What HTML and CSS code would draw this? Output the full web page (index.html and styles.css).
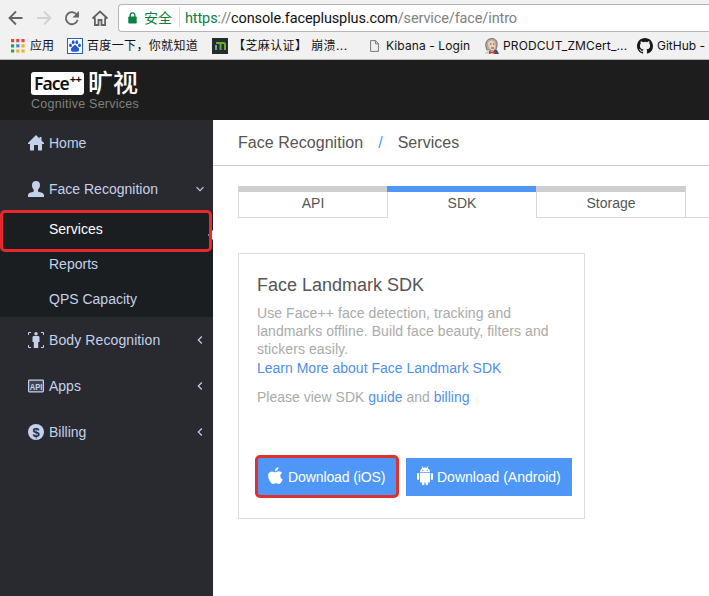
FILE: index.html
```html
<!DOCTYPE html>
<html lang="en">
<head>
<meta charset="utf-8">
<title>Face++ Console</title>
<link rel="stylesheet" href="styles.css">
</head>
<body>
<div class="browser">
  <div class="toolbar">
    <svg class="nav" width="112" height="20" viewBox="0 0 112 20" fill="none" stroke="#646464" stroke-width="1.800">
      <path d="M22.500 10H10M16 3.500L9.500 10l6.500 6.500"/>
      <path stroke="#d2d2d2" d="M37 10h13M44 3.500l6.500 6.500-6.500 6.500"/>
      <path d="M76.600 6.500A6 6 0 1 0 77.600 12"/><path fill="#646464" stroke="none" d="M79 3v6.500h-6.500z"/>
      <path stroke-width="1.800" d="M92.500 10.500L100 3.500l7.500 7M94.900 9.500v7.500h3.600v-5h3v5h3.600V9.500"/>
    </svg>
    <div class="address">
      <svg class="lock" width="9" height="12" viewBox="0 0 9 12"><path d="M2.200 5V3.200a2.300 2.300 0 0 1 4.600 0V5" fill="none" stroke="#0b8043" stroke-width="1.300"/><rect x=".3" y="4.500" width="8.400" height="7" rx=".8" fill="#0b8043"/></svg>
      <span class="secure">安全</span>
      <span class="url"><span class="scheme">https</span>://<span class="host">console.faceplusplus.com</span>/service/face/intro</span>
    </div>
  </div>
  <div class="bookmarks">
    <span class="mark apps"><svg width="14" height="14" viewBox="0 0 14 14"><path fill="#dd4b3e" d="M0 0h3.200v3.200H0zM5.200 0h3.200v3.200H5.200zM10.400 0h3.200v3.200h-3.200z"/><path fill="#20a060" d="M0 5.200h3.200v3.200H0zM0 10.400h3.200v3.200H0z"/><path fill="#4285e8" d="M5.200 5.200h3.200v3.200H5.200z"/><path fill="#e8b22c" d="M10.400 5.200h3.200v3.200h-3.200zM5.200 10.400h3.200v3.200H5.200zM10.400 10.400h3.200v3.200h-3.200z"/></svg><span>应用</span></span>
    <span class="mark baidu"><svg width="16" height="16" viewBox="0 0 16 16"><rect x=".5" y=".5" width="15" height="15" fill="#fff" stroke="#2362c8"/><g fill="#2459d0"><ellipse cx="3.500" cy="7.300" rx="1.400" ry="1.900"/><ellipse cx="6.200" cy="4.200" rx="1.400" ry="2"/><ellipse cx="9.800" cy="4.200" rx="1.400" ry="2"/><ellipse cx="12.500" cy="7.300" rx="1.400" ry="1.900"/><path d="M8 7c1.500 0 2 1.500 3.200 2.600 1.800 1.700.8 4.400-1.200 4.200-1.500-.2-2.500-.2-4 0-2 .2-3-2.500-1.200-4.200C6 8.500 6.500 7 8 7z"/></g></svg><span>百度一下，你就知道</span></span>
    <span class="mark sesame"><svg width="16" height="16" viewBox="0 0 16 16"><path fill="#262b2c" d="M0 0h16v16H0z"/><path fill="none" stroke="#69a83d" stroke-width="2" d="M4 5h7.500a1.500 1.500 0 0 1 1.500 1.500V12M8.500 5v7"/><path fill="none" stroke="#5da9ae" stroke-width="2" d="M4 7v5"/></svg><span>【芝麻认证】 崩溃...</span></span>
    <span class="mark kibana"><svg width="9" height="12" viewBox="0 0 9 12" fill="none" stroke="#777"><path d="M.6.600h4.900l2.900 3v7.800H.6zM5.400.600v3.200h3"/></svg><span>Kibana - Login</span></span>
    <span class="mark jenkins"><svg width="16" height="17" viewBox="0 0 16 17"><path fill="#b5aaa0" stroke="#55504c" stroke-width=".7" d="M3 12C1 8 1 2 6 .8c5-1.200 8 2 7 7.200-.3 2-1 4-2 5z"/><path fill="#ecd0b2" d="M4 5c1-2 3-3 5-2 3 1 3 7 .5 9.500C7 13 4.500 11 4 5z"/><path fill="#ddd2c8" d="M1 16c0-2 2-4 4-4l3 3 5-2 2 3z"/><path fill="#34556c" d="M10 12h3l2 4h-5z"/><path fill="#c43b38" d="M5 12.800l3 1 3-1V16l-3-1-3 1z"/><path stroke="#3b3431" stroke-width=".8" fill="none" d="M6 6h1.500M9 6h1.500M7 10h3"/></svg><span>PRODCUT_ZMCert_...</span></span>
    <span class="mark github"><svg width="16" height="16" viewBox="0 0 16 16"><path fill="#171717" fill-rule="evenodd" d="M8 0C3.580 0 0 3.580 0 8c0 3.540 2.290 6.530 5.470 7.590.4.070.55-.17.55-.38v-1.490c-2.010.37-2.530-.49-2.690-.94-.09-.23-.48-.94-.82-1.130-.28-.15-.68-.52-.01-.53.630-.01 1.080.58 1.230.82.72 1.210 1.870.87 2.330.66.070-.52.280-.87.510-1.070-1.780-.2-3.640-.89-3.640-3.950 0-.87.310-1.590.82-2.150-.08-.2-.36-1.020.08-2.120 0 0 .67-.21 2.200.82a7.600 7.600 0 0 1 4 0c1.530-1.040 2.200-.82 2.200-.82.440 1.100.160 1.920.080 2.120.510.560.820 1.270.820 2.150 0 3.070-1.870 3.750-3.650 3.950.290.250.540.730.540 1.480v2.200c0 .21.150.46.550.38A8 8 0 0 0 16 8c0-4.420-3.580-8-8-8z"/></svg><span>GitHub -</span></span>
  </div>
</div>
<header class="header">
  <div class="logo"><span class="face">Face<sup>++</sup></span><span class="brand">旷视</span></div>
  <div class="tagline">Cognitive Services</div>
</header>
<div class="layout">
  <nav class="sidebar">
    <div class="item"><svg class="icon" viewBox="0 0 16 16"><path d="M8 0L0 8v1h2v6.500h4V10h4v5.500h4V9h2V8l-2.500-2.500V2h-2v1.500z"/></svg><span>Home</span></div>
    <div class="item"><svg class="icon" viewBox="0 0 16 16"><path d="M8 0C5.500 0 4 1.500 4 4c0 2 .7 3.500 1.700 4.500v1.800C5.500 11.500 0 11 0 14.300V16h16v-1.700c0-3.300-5.500-2.800-6-4V8.500c1-1 2-2.500 2-4.500C12 1.500 10.500 0 8 0z"/></svg><span>Face Recognition</span><svg class="chevron" viewBox="0 0 8 8"><path d="M.5 2.200L4 5.700l3.500-3.500"/></svg></div>
    <div class="submenu">
      <div class="subitem active">Services</div>
      <div class="subitem">Reports</div>
      <div class="subitem">QPS Capacity</div>
    </div>
    <div class="item"><svg class="icon" viewBox="0 0 16 16"><path fill="none" stroke="#c4d1eb" d="M.5 3V.5H3M13 .5h2.500V3M.5 13v2.500H3M13 15.500h2.500V13"/><circle cx="8" cy="1.700" r="1.700"/><path d="M6 4h4c1 0 1.500.6 1.500 1.500V10h-1.300v6H5.800v-6H4.500V5.500C4.500 4.600 5 4 6 4z"/></svg><span class="wide">Body Recognition</span><svg class="chevron" viewBox="0 0 8 8"><path d="M5.800.5L2.300 4l3.500 3.500"/></svg></div>
    <div class="item"><svg class="icon" viewBox="0 0 16 16"><rect x=".6" y="2.100" width="14.800" height="11.800" rx=".8" fill="#3e4454" stroke="#c4d1eb" stroke-width="1.200"/><text class="api" x="8" y="11.500" text-anchor="middle" textLength="12.500" lengthAdjust="spacingAndGlyphs">API</text></svg><span>Apps</span><svg class="chevron" viewBox="0 0 8 8"><path d="M5.800.5L2.300 4l3.500 3.500"/></svg></div>
    <div class="item"><svg class="icon" viewBox="0 0 16 16"><circle cx="8" cy="8" r="8"/><text class="dollar" x="8" y="12.600" text-anchor="middle">$</text></svg><span>Billing</span><svg class="chevron" viewBox="0 0 8 8"><path d="M5.800.5L2.300 4l3.500 3.500"/></svg></div>
  </nav>
  <main class="main">
    <div class="breadcrumb"><span>Face Recognition</span><span class="slash">/</span><span>Services</span></div>
    <div class="tabs">
      <div class="tab">API</div>
      <div class="tab selected">SDK</div>
      <div class="tab">Storage</div>
      <div class="rest"></div>
    </div>
    <section class="card">
      <h1>Face Landmark SDK</h1>
      <p class="about">Use Face++ face detection, tracking and<br>landmarks offline. Build face beauty, filters and<br>stickers easily.</p>
      <a class="more">Learn More about Face Landmark SDK</a>
      <p class="note">Please view SDK <a>guide</a> and <a>billing</a></p>
      <div class="buttons">
        <a class="button ios"><svg width="15" height="18" viewBox="0 0 15 18"><path d="M10.500 0c.2 2-1.500 4.200-3.500 4.200C6.800 2.200 8.500.3 10.500 0zM7.600 5.200c.8 0 1.700-.9 3.300-.9 1.300 0 2.500.7 3.200 1.700-2.700 1.600-2.200 5.200.6 6.300-.8 2.200-2.200 4.700-3.900 4.700-1.100 0-1.500-.7-2.900-.7-1.300 0-1.800.7-2.900.7C2.500 17-2.600 7.600 1.900 5c2.600-1.500 4.300.2 5.700.2z"/></svg><span>Download (iOS)</span></a>
        <a class="button android"><svg width="16" height="20" viewBox="0 0 16 20"><path d="M3 6.300C3 4 4.200 2.800 5.500 2L4.600.4l.5-.3 1 1.600a6 6 0 0 1 3.800 0l1-1.600.5.300L10.500 2C11.800 2.800 13 4 13 6.300zM3 7h10v8.500c0 .6-.4 1-1 1h-1V18a1.200 1.200 0 0 1-2.400 0v-1.500H7.400V18A1.200 1.200 0 0 1 5 18v-1.500H4c-.6 0-1-.4-1-1z"/><rect y="7" width="2.200" height="7" rx="1.100"/><rect x="13.800" y="7" width="2.200" height="7" rx="1.100"/><circle cx="5.800" cy="4.300" r=".6" fill="#4f97f7"/><circle cx="10.200" cy="4.300" r=".6" fill="#4f97f7"/></svg><span>Download (Android)</span></a>
      </div>
    </section>
  </main>
</div>
</body>
</html>
```
FILE: styles.css
```css
*, *::before, *::after { box-sizing: border-box; }
body { margin: 0; width: 709px; height: 596px; overflow: hidden; background: #fff; color: #555; font: 14px "Liberation Sans", Arial, sans-serif; }
svg { flex: none; }

.browser { height: 60px; background: #f1f1f1; border-bottom: 1px solid #b5b7b8; overflow: hidden; }
.toolbar { display: flex; height: 32px; padding-top: 4px; }
.nav { margin-top: 4px; margin-right: 6px; }
.address { display: flex; align-items: center; flex: 1; height: 28px; padding-left: 9px; border: 1px solid #b5b5b5; border-right: 0; border-radius: 4px 0 0 4px; background: #fff; white-space: nowrap; }
.lock { margin-top: -1px; }
.secure { margin: -2px 0 0 7px; padding-right: 7px; border-right: 1px solid #ddd; color: #0b8043; font: 14px/20px "Noto Sans CJK SC", sans-serif; }
.url { margin: 1px 0 0 5px; color: #808080; font: 14.5px/20px Roboto, sans-serif; letter-spacing: -.12px; }
.scheme { color: #0b8043; }
.host { color: #111; }
.bookmarks { display: flex; height: 28px; white-space: nowrap; color: #111; font: 12px/18px Inter, "Noto Sans CJK SC", sans-serif; }
.mark { display: flex; align-items: center; flex: none; height: 28px; }
.mark span { margin-left: 5px; }
.apps { width: 56px; margin-left: 11px; }
.baidu { width: 145px; }
.baidu span { margin-left: 4px; letter-spacing: .35px; }
.sesame { width: 158px; }
.sesame span { letter-spacing: .4px; }
.kibana { width: 114px; }
.kibana span { margin-left: 7px; letter-spacing: .1px; }
.jenkins { width: 153px; }
.jenkins span { margin-left: 3px; letter-spacing: .12px; }
.github span { margin-left: 4px; }

.header { height: 60px; padding: 9px 0 0 31px; background: #1d1d1d; }
.logo { display: flex; height: 26px; align-items: center; }
.face { display: flex; width: 53px; height: 23px; padding-left: 3px; margin-top: 2px; border-radius: 3px; background: #fff; color: #111; font: 600 17.5px/23px "Noto Sans", sans-serif; letter-spacing: -1px; white-space: nowrap; }
.face sup { margin-left: 1px; font: 700 11px/13px "Noto Sans", sans-serif; letter-spacing: -.4px; }
.brand { margin: -3px 0 0 4px; color: #fff; font: 500 25px/26px "Noto Sans CJK SC", sans-serif; }
.tagline { margin-top: 1px; color: #808080; font-size: 12.500px; line-height: 16px; letter-spacing: .25px; }

.layout { display: flex; height: 476px; }
.sidebar { width: 213px; background: #292a30; color: #c4d1eb; }
.item { display: flex; align-items: center; height: 46px; padding: 0 9px 0 28px; }
.wide { letter-spacing: .1px; }
.icon { width: 16px; height: 16px; margin: -1px 5px 0 0; fill: #c4d1eb; }
.api { font: bold 9px "Liberation Sans", sans-serif; }
.dollar { font: bold 13px "Liberation Sans", sans-serif; fill: #292a30; }
.chevron { width: 8px; height: 8px; margin: -1px 0 0 auto; fill: none; stroke: #c4d1eb; stroke-width: 1.2; }
.submenu { height: 105px; background: #1b1e21; }
.subitem { height: 35px; padding-left: 49px; line-height: 35px; }
.active { position: relative; color: #fff; }
.active::before { content: ""; position: absolute; right: 0; top: 18px; border: 5px solid transparent; border-right-color: #eee; border-left: 0; }
.active::after { content: ""; position: absolute; left: 0; top: -2px; width: 212px; height: 42px; border: 3px solid #e8282a; border-radius: 5px; }

.main { flex: 1; }
.breadcrumb { display: flex; height: 46px; padding-left: 25px; border-bottom: 1px solid #ccc; font-size: 16px; line-height: 45px; letter-spacing: .04px; }
.slash { margin: 0 15px; color: #4f97f7; }
.tabs { display: flex; height: 32px; margin: 20px 0 0 25px; }
.tab { width: 150px; border: 1px solid #d8d8d8; border-top: 0; text-align: center; line-height: 23px; }
.tab::before { content: ""; display: block; height: 6px; margin: 0 -1px; background: #cfcfcf; }
.selected { width: 148px; border-color: transparent; border-left: 0; border-right: 0; }
.selected::before { margin-left: -1px; margin-right: 0; position: relative; background: #4f97f7; }
.rest { flex: 1; border-bottom: 1px solid #d8d8d8; }
.card { width: 347px; height: 266px; margin: 35px 0 0 25px; padding: 21px 12px 0 18px; border: 1px solid #ddd; color: #aaa; }
.card h1 { margin: 0 0 9px; color: #555; font-size: 18px; line-height: 20px; font-weight: 400; }
.card p { margin: 0; line-height: 18px; }
.card .about { letter-spacing: .07px; white-space: nowrap; }
.card a { color: #4f8fe6; }
.card .more { display: block; line-height: 20px; }
.card .note { margin-top: 10px; }
.buttons { display: flex; height: 38px; margin-top: 52px; gap: 9px; }
.card .button { position: relative; display: flex; align-items: center; height: 38px; background: #4f97f7; color: #fff; fill: #fff; white-space: nowrap; }
.ios { width: 140px; padding-left: 11px; letter-spacing: -.1px; }
.ios svg { margin-top: -2px; margin-right: 5px; }
.android { width: 166px; padding-left: 11px; }
.android svg { margin-top: -3px; margin-right: 4px; }
.ios::after { content: ""; position: absolute; left: -2px; top: -3px; width: 144px; height: 43px; border: 3px solid #e0302f; border-radius: 5px; }
```
